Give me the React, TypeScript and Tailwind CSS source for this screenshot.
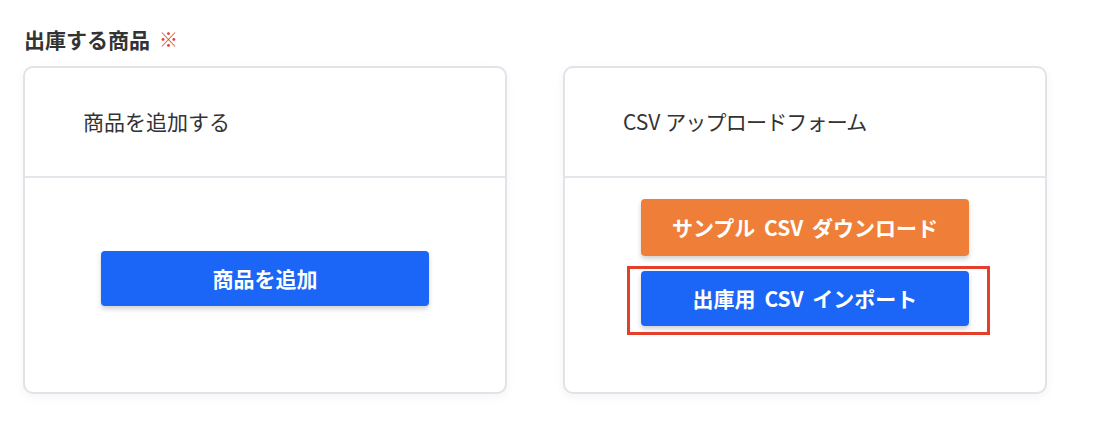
import React from 'react';

const FONT = { fontFamily: '"Noto Sans CJK JP", "Noto Sans", sans-serif' };

interface CardProps {
  title: React.ReactNode;
  bodyClass: string;
  children: React.ReactNode;
}

const Card = ({ title, bodyClass, children }: CardProps) => (
  <div className="flex h-[328px] w-[484px] flex-col rounded-[10px] border-2 border-[#e2e3e9] bg-white shadow-[0_3px_10px_rgba(20,30,60,0.05)]">
    <div className="flex h-[110px] items-center border-b-2 border-[#e4e5ea] pl-[58px] text-[21px] text-[#333]">
      {title}
    </div>
    <div className={`flex flex-1 flex-col items-center ${bodyClass}`}>{children}</div>
  </div>
);

const Button = ({ color, size, children }: { color: string; size: string; children: React.ReactNode }) => (
  <button
    type="button"
    className={`flex w-[328px] items-center justify-center rounded-[4px] text-[21px] font-bold text-white shadow-[0_3px_5px_rgba(0,0,0,0.18)] [word-spacing:4px] ${size} ${color}`}
  >
    {children}
  </button>
);

export default function App() {
  return (
    <div className="min-h-[428px] bg-white px-[23px] pt-[23px]" style={FONT}>
      <h2 className="mb-[11px] flex items-center gap-[9px] pl-px text-[21px] font-bold leading-[32px] text-[#333]">
        出庫する商品
        <span className="text-[19px] font-normal text-[#d9453b]">※</span>
      </h2>

      <div className="flex gap-[56px]">
        <Card title="商品を追加する" bodyClass="pt-[73px]">
          <Button color="bg-[#1b66f6]" size="h-[55px]">商品を追加</Button>
        </Card>

        <Card
          title={
            <span className="whitespace-pre">
              CSV <span className="tracking-[-0.8px]">アップロードフォーム</span>
            </span>
          }
          bodyClass="pt-[21px]"
        >
          <Button color="bg-[#ef7f38]" size="h-[57px]">サンプル CSV ダウンロード</Button>
          <div className="relative mt-[15px]">
            <Button color="bg-[#1b66f6]" size="h-[55px]">出庫用 CSV インポート</Button>
            <div className="pointer-events-none absolute -top-[5px] -right-[21px] -bottom-[9px] -left-[14px] border-[3px] border-[#e33f2b]" />
          </div>
        </Card>
      </div>
    </div>
  );
}
